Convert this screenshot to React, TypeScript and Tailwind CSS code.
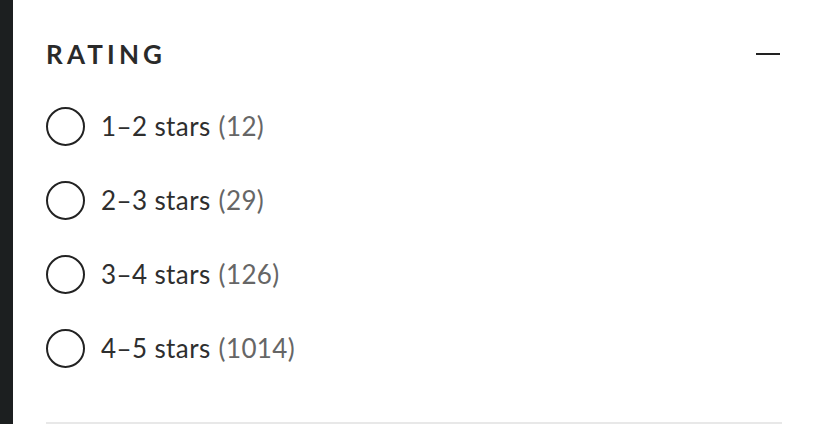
import React from "react";

const options = [
  { label: "1–2 stars", count: 12 },
  { label: "2–3 stars", count: 29 },
  { label: "3–4 stars", count: 126 },
  { label: "4–5 stars", count: 1014 },
];

export default function App() {
  return (
    <div className="flex h-[424px] w-[814px] overflow-hidden bg-white" style={{ fontFamily: "Lato, 'Noto Sans', sans-serif" }}>
      <div className="w-[13px] shrink-0 bg-[#1c1f20]" />
      <div className="flex flex-1 flex-col pl-[33px] pr-[32px]">
        <div className="flex items-center justify-between pt-[38px]">
          <h2 className="text-[26px] font-bold leading-[32px] tracking-[0.16em] text-[#2a2a2a]">RATING</h2>
          <div className="mr-[2px] h-[2px] w-[24px] bg-[#222]" />
        </div>
        <ul className="mt-[37px] flex flex-col gap-[35px]">
          {options.map((o) => (
            <li key={o.label} className="flex items-center">
              <span className="h-[39px] w-[39px] shrink-0 rounded-full border-2 border-[#222]" />
              <span className="ml-[16px] text-[26px] leading-[39px] tracking-[0.015em] text-[#2e2e2e]">
                {o.label}
                <span className="ml-[8px] text-[#666]">({o.count})</span>
              </span>
            </li>
          ))}
        </ul>
        <div className="mt-auto h-[2px] bg-[#e8e8e8]" />
      </div>
    </div>
  );
}
